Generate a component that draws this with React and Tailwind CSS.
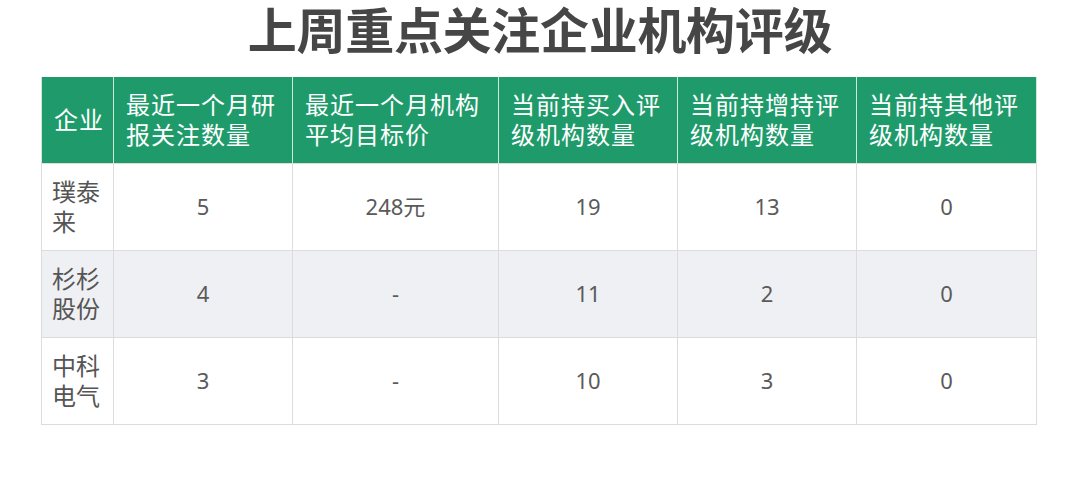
const header = [
  "企业",
  "最近一个月研报关注数量",
  "最近一个月机构平均目标价",
  "当前持买入评级机构数量",
  "当前持增持评级机构数量",
  "当前持其他评级机构数量",
];

const rows = [
  { name: "璞泰来", values: ["5", "248元", "19", "13", "0"] },
  { name: "杉杉股份", values: ["4", "-", "11", "2", "0"] },
  { name: "中科电气", values: ["3", "-", "10", "3", "0"] },
];

const widths = ["w-[72px]", "w-[179px]", "w-[206px]", "w-[179px]", "w-[179px]", "w-[180px]"];

export default function App() {
  return (
    <div
      className="w-[1080px] h-[485px] bg-white overflow-hidden"
      style={{ fontFamily: '"Noto Sans", "Noto Sans CJK SC", sans-serif' }}
    >
      <div className="pt-[4px]">
        <h1 className="text-center text-[49px] leading-[52px] font-bold text-[#464646] tracking-[-0.3px]">
          上周重点关注企业机构评级
        </h1>
      </div>
      <div className="pl-[41px] pt-[21px]">
        <table className="border-collapse table-fixed w-[995px]">
          <thead>
            <tr className="bg-[#1f9b6b] h-[86px]">
              {header.map((h, i) => (
                <th
                  key={i}
                  className={`${widths[i]} text-left align-middle font-normal text-white text-[24px] leading-[30px] px-[12px] border-x border-[#cfe6da] tracking-[1px] ${i === 0 ? "whitespace-nowrap px-[10px]" : ""}`}
                >
                  {h}
                </th>
              ))}
            </tr>
          </thead>
          <tbody>
            {rows.map((r, ri) => (
              <tr key={ri} className={`h-[87px] ${ri === 1 ? "bg-[#eff0f3]" : "bg-white"}`}>
                <td className="border border-[#dcdcdc] px-[10px] text-[24px] leading-[30px] text-[#555555] align-middle">
                  {r.name}
                </td>
                {r.values.map((v, vi) => (
                  <td
                    key={vi}
                    className="border border-[#dcdcdc] text-center align-middle text-[22px] text-[#5a5a5a]"
                  >
                    {v}
                  </td>
                ))}
              </tr>
            ))}
          </tbody>
        </table>
      </div>
    </div>
  );
}
